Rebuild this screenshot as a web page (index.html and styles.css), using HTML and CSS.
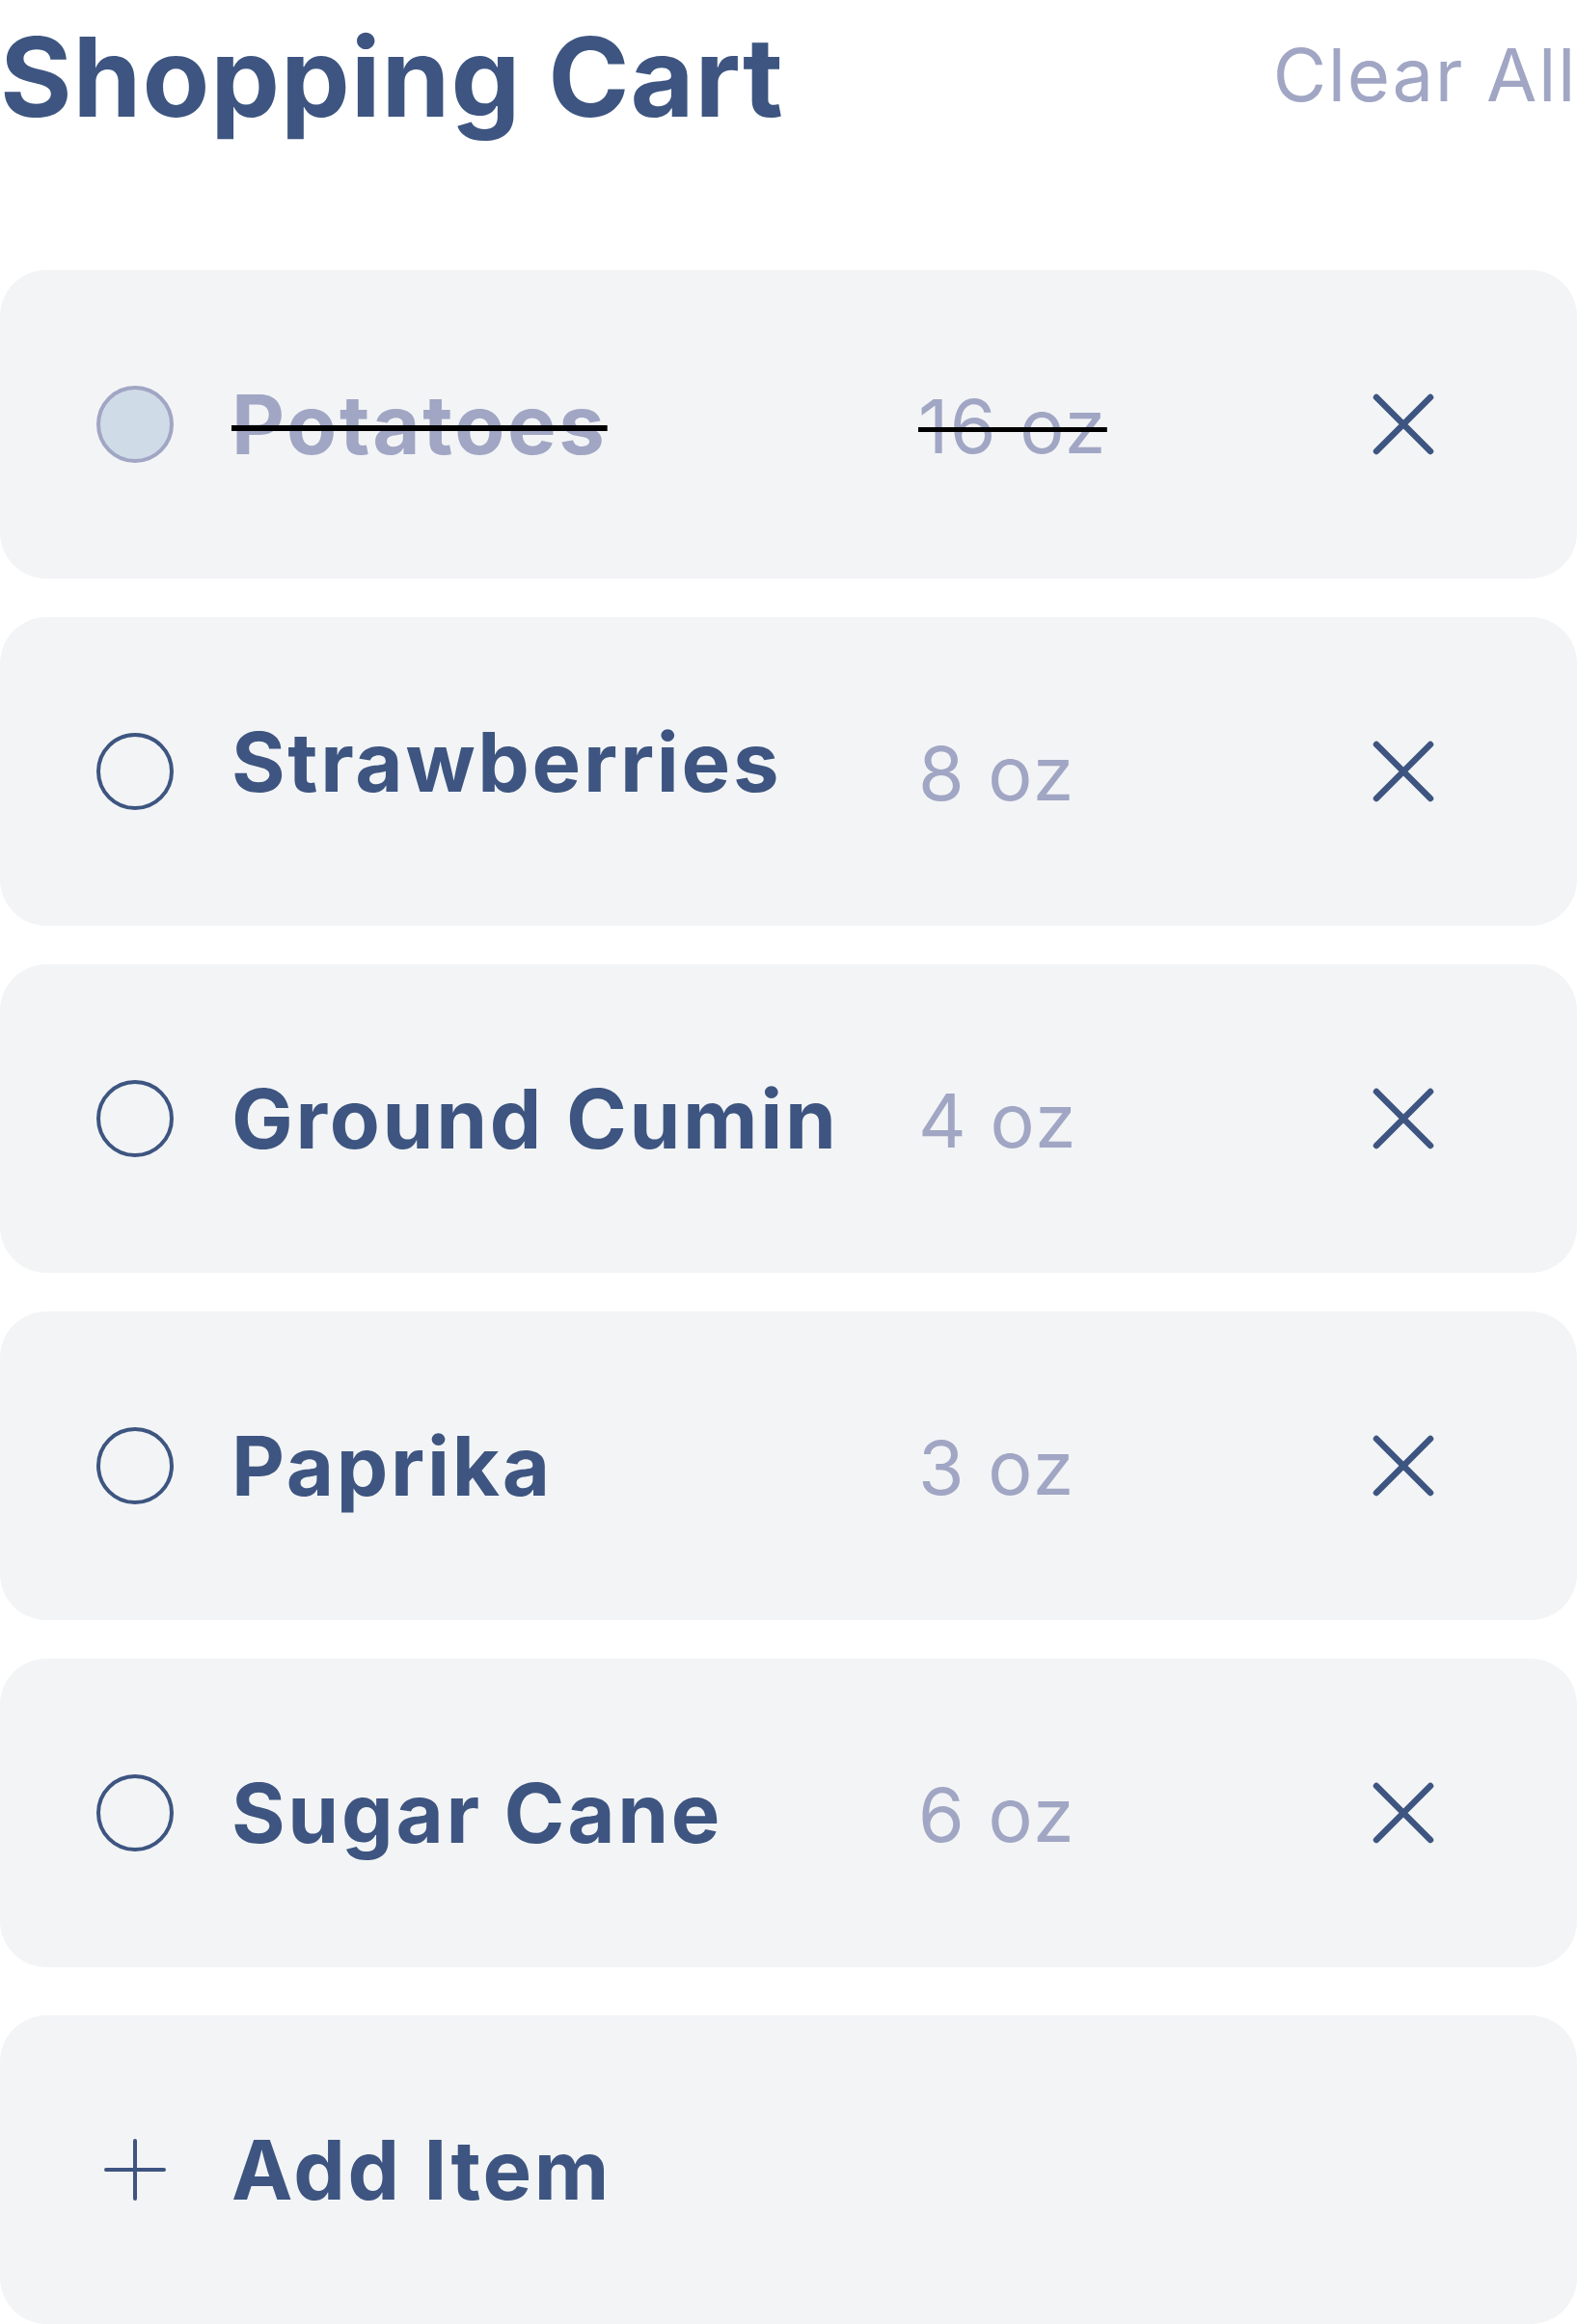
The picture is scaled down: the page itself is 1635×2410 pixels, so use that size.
FILE: index.html
```html
<!DOCTYPE html>
<html lang="en">
<head>
<meta charset="utf-8">
<title>Shopping Cart</title>
<link rel="stylesheet" href="styles.css">
</head>
<body>
<main class="cart">
  <header class="cart-header">
    <h1 class="cart-title">Shopping Cart</h1>
    <button class="clear-all" type="button">Clear All</button>
  </header>

  <ul class="cart-list">
    <li class="cart-item is-done">
      <span class="check"></span>
      <span class="item-name">Potatoes</span>
      <span class="item-qty">16 oz</span>
      <span class="remove"><svg viewBox="0 0 64 64" width="64" height="64"><path d="M4 4 L60 60 M60 4 L4 60" /></svg></span>
    </li>
    <li class="cart-item">
      <span class="check"></span>
      <span class="item-name item-name--raised">Strawberries</span>
      <span class="item-qty">8 oz</span>
      <span class="remove"><svg viewBox="0 0 64 64" width="64" height="64"><path d="M4 4 L60 60 M60 4 L4 60" /></svg></span>
    </li>
    <li class="cart-item">
      <span class="check"></span>
      <span class="item-name">Ground Cumin</span>
      <span class="item-qty">4 oz</span>
      <span class="remove"><svg viewBox="0 0 64 64" width="64" height="64"><path d="M4 4 L60 60 M60 4 L4 60" /></svg></span>
    </li>
    <li class="cart-item">
      <span class="check"></span>
      <span class="item-name">Paprika</span>
      <span class="item-qty">3 oz</span>
      <span class="remove"><svg viewBox="0 0 64 64" width="64" height="64"><path d="M4 4 L60 60 M60 4 L4 60" /></svg></span>
    </li>
    <li class="cart-item">
      <span class="check"></span>
      <span class="item-name">Sugar Cane</span>
      <span class="item-qty">6 oz</span>
      <span class="remove"><svg viewBox="0 0 64 64" width="64" height="64"><path d="M4 4 L60 60 M60 4 L4 60" /></svg></span>
    </li>
  </ul>

  <div class="add-item">
    <span class="plus"><svg viewBox="0 0 80 80" width="80" height="80"><path d="M40 10 L40 70 M10 40 L70 40" /></svg></span>
    <span class="add-label">Add Item</span>
  </div>
</main>
</body>
</html>
```

FILE: styles.css
```css
* {
  box-sizing: border-box;
}

html, body {
  margin: 0;
  padding: 0;
  background: #ffffff;
}

body {
  font-family: Inter, "Noto Sans", "Liberation Sans", sans-serif;
  color: #3d5580;
  overflow: hidden;
}

.cart {
  width: 1635px;
}

.cart-header {
  display: flex;
  justify-content: space-between;
  align-items: flex-start;
  height: 280px;
}

.cart-title {
  margin: 0;
  padding-top: 23px;
  font-size: 114px;
  line-height: 1;
  font-weight: 700;
  letter-spacing: 0.9px;
  color: #3d5580;
}

.clear-all {
  margin: 0;
  padding: 39px 0 0;
  border: 0;
  background: none;
  font-family: inherit;
  font-size: 76px;
  line-height: 1;
  font-weight: 400;
  letter-spacing: 1.6px;
  color: #a0a6c3;
  white-space: nowrap;
}

.cart-list {
  list-style: none;
  margin: 0;
  padding: 0;
  display: flex;
  flex-direction: column;
  gap: 40px;
}

.cart-item,
.add-item {
  display: flex;
  align-items: center;
  height: 320px;
  padding: 0 148px 0 100px;
  background: #f3f4f6;
  border-radius: 48px;
}

.add-item {
  margin-top: 50px;
}

.check {
  flex: none;
  width: 80px;
  height: 80px;
  border: 4px solid #3d5580;
  border-radius: 50%;
  margin-right: 60px;
}

.item-name,
.add-label {
  flex: none;
  width: 712px;
  font-size: 85px;
  line-height: 1;
  font-weight: 700;
  letter-spacing: 2.7px;
  white-space: nowrap;
}

.item-name--raised {
  margin-bottom: 20px;
}

.item-qty {
  flex: 1;
  padding-top: 4px;
  font-size: 77px;
  line-height: 1;
  font-weight: 400;
  letter-spacing: 1.5px;
  color: #a0a6c3;
  white-space: nowrap;
}

.remove {
  flex: none;
  width: 64px;
  height: 64px;
  display: block;
}

.remove svg,
.plus svg {
  display: block;
  fill: none;
  stroke: #3d5580;
  stroke-linecap: round;
}

.remove svg {
  stroke-width: 6.5;
}

.plus {
  flex: none;
  width: 80px;
  height: 80px;
  margin-right: 60px;
}

.plus svg {
  stroke-width: 4;
}

.is-done .check {
  background: #d0dbe8;
  border-color: #a0a6c3;
}

.is-done .item-name {
  color: #a0a6c3;
}

.is-done .item-name,
.is-done .item-qty {
  text-decoration: line-through;
  text-decoration-color: #000000;
  text-decoration-thickness: 6px;
}

.is-done .item-qty {
  text-decoration-thickness: 5px;
}
```
